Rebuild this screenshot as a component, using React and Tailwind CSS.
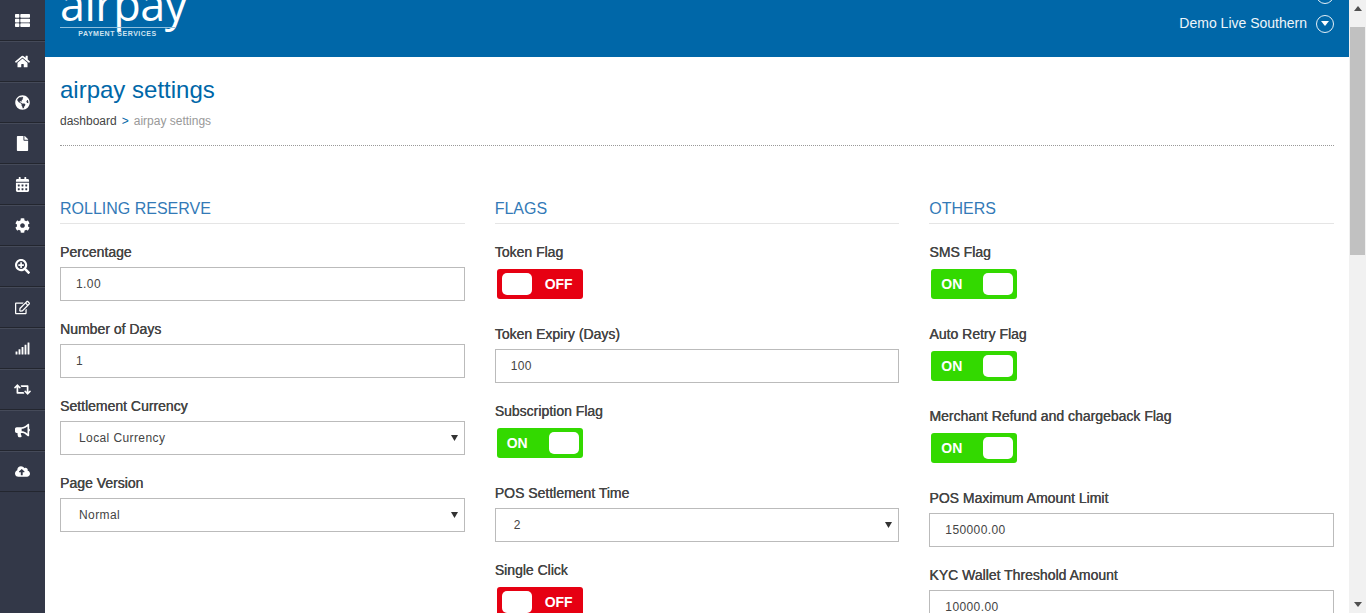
import React from "react";
import {
  FaThList, FaHome, FaGlobeAmericas, FaFile, FaCalendarAlt, FaCog, FaSearchPlus,
  FaRegEdit, FaSignal, FaRetweet, FaBullhorn, FaCloudUploadAlt,
} from "react-icons/fa";

const icons = [FaThList, FaHome, FaGlobeAmericas, FaFile, FaCalendarAlt, FaCog, FaSearchPlus, FaRegEdit, FaSignal, FaRetweet, FaBullhorn, FaCloudUploadAlt];

function Label({ children, className = "" }) {
  return <label className={"block h-[20px] leading-[20px] text-[14px] font-medium text-[#444] [text-shadow:0.3px_0_0_#444] " + className}>{children}</label>;
}

function InputField({ label, value }) {
  return (
    <div className="mb-[18px]">
      <Label className="mb-[5px]">{label}</Label>
      <input readOnly value={value} className="block w-full h-[34px] border border-[#bbb] pl-[15px] text-[12px] tracking-[0.4px] text-[#444] bg-white outline-none" />
    </div>
  );
}

function SelectField({ label, value }) {
  return (
    <div className="mb-[18px]">
      <Label className="mb-[5px]">{label}</Label>
      <div className="flex items-center justify-between h-[34px] border border-[#bbb] pl-[18px] pr-[6px] text-[12px] tracking-[0.4px] text-[#444] bg-white">
        <span>{value}</span>
        <svg width="7" height="6" viewBox="0 0 7 6"><path d="M0 0h7L3.5 6z" fill="#333" /></svg>
      </div>
    </div>
  );
}

function Toggle({ label, on }) {
  return (
    <div className="mb-[25px]">
      <Label className="mb-[7px]">{label}</Label>
      <div className={"ml-[2px] w-[86px] h-[30px] rounded-[3px] flex items-center justify-between text-white font-bold text-[14px] " + (on ? "bg-[#33d900] pl-[10px] pr-[4px]" : "bg-[#e60012] pl-[5px] pr-[10px]")}>
        {on ? (
          <>
            <span>ON</span>
            <span className="w-[30px] h-[22px] bg-white rounded-[5px]" />
          </>
        ) : (
          <>
            <span className="w-[30px] h-[22px] bg-white rounded-[5px]" />
            <span>OFF</span>
          </>
        )}
      </div>
    </div>
  );
}

function Heading({ children }) {
  return <h3 className="h-[30px] mb-[18px] leading-[30px] border-b border-[#e5e5e5] text-[16px] uppercase text-[#337ab7] -mt-[1px]">{children}</h3>;
}

function Circle() {
  return (
    <span className="flex items-center justify-center w-[18px] h-[18px] rounded-full border border-[#e6f0f7]">
      <svg width="8" height="5" viewBox="0 0 8 5"><path d="M0 0h8L4 5z" fill="#fff" /></svg>
    </span>
  );
}

export default function App() {
  return (
    <div className="flex h-[613px] w-[1366px] overflow-hidden bg-white font-['Liberation_Sans',Arial,sans-serif]">
      <aside className="w-[45px] shrink-0 bg-[#333848] flex flex-col">
        {icons.map((Icon, i) => (
          <div key={i} className={"flex items-center justify-center border-b border-b-[#23262f] border-t border-t-[#454a59] text-white " + (i === 0 ? "h-[41px] border-t-0" : "h-[41px]")}>
            <Icon size={i === 9 ? 17 : 15} />
          </div>
        ))}
      </aside>

      <main className="flex-1 min-w-0 flex flex-col">
        <header className="h-[57px] shrink-0 bg-[#0067a8] flex justify-between overflow-hidden px-[15px] text-white">
          <div className="flex flex-col items-start w-[115px] -mt-[14px]">
            <span className="h-[40px] leading-[36px] text-[45px] font-['Open_Sans',sans-serif] font-normal tracking-[-0.5px]">airpay</span>
            <span className="w-full h-px bg-[#8fc0de] mt-[1px]" />
            <span className="w-full text-center text-[7px] font-bold tracking-[0.5px] text-[#cfe3f0] leading-[12px] mt-[0px]">PAYMENT SERVICES</span>
          </div>
          <div className="flex flex-col items-end -mt-[14px]">
            <Circle />
            <div className="flex items-center gap-[9px] mt-[9px]">
              <span className="text-[14px] text-[#eef5fa]">Demo Live Southern</span>
              <Circle />
            </div>
          </div>
        </header>

        <div className="px-[15px] flex-1">
          <div className="border-b border-dotted border-[#999] h-[89px] pt-[16px]">
            <h1 className="text-[24px] leading-[34px] text-[#0067a8]">airpay settings</h1>
            <p className="mt-[5px] text-[12px] leading-[18px] text-[#999]">
              <span className="text-[#444]">dashboard</span>
              <span className="text-[#0067a8] mx-[5px]">&gt;</span>
              airpay settings
            </p>
          </div>
          <div className="grid grid-cols-3 gap-x-[30px] pt-[49px]">
            <section>
              <Heading>Rolling Reserve</Heading>
              <InputField label="Percentage" value="1.00" />
              <InputField label="Number of Days" value="1" />
              <SelectField label="Settlement Currency" value="Local Currency" />
              <SelectField label="Page Version" value="Normal" />
            </section>
            <section>
              <Heading>Flags</Heading>
              <Toggle label="Token Flag" on={false} />
              <InputField label="Token Expiry (Days)" value="100" />
              <Toggle label="Subscription Flag" on />
              <SelectField label="POS Settlement Time" value="2" />
              <Toggle label="Single Click" on={false} />
            </section>
            <section>
              <Heading>Others</Heading>
              <Toggle label="SMS Flag" on />
              <Toggle label="Auto Retry Flag" on />
              <Toggle label="Merchant Refund and chargeback Flag" on />
              <InputField label="POS Maximum Amount Limit" value="150000.00" />
              <InputField label="KYC Wallet Threshold Amount" value="10000.00" />
            </section>
          </div>
        </div>
      </main>

      <div className="w-[17px] shrink-0 bg-[#f1f1f1] flex flex-col items-center">
        <svg className="mt-[6px]" width="8" height="5" viewBox="0 0 8 5"><path d="M4 0l4 5H0z" fill="#505050" /></svg>
        <div className="w-[15px] h-[228px] mt-[16px] bg-[#c1c1c1]" />
        <div className="flex-1" />
        <svg className="mb-[6px]" width="8" height="5" viewBox="0 0 8 5"><path d="M0 0h8L4 5z" fill="#505050" /></svg>
      </div>
    </div>
  );
}
